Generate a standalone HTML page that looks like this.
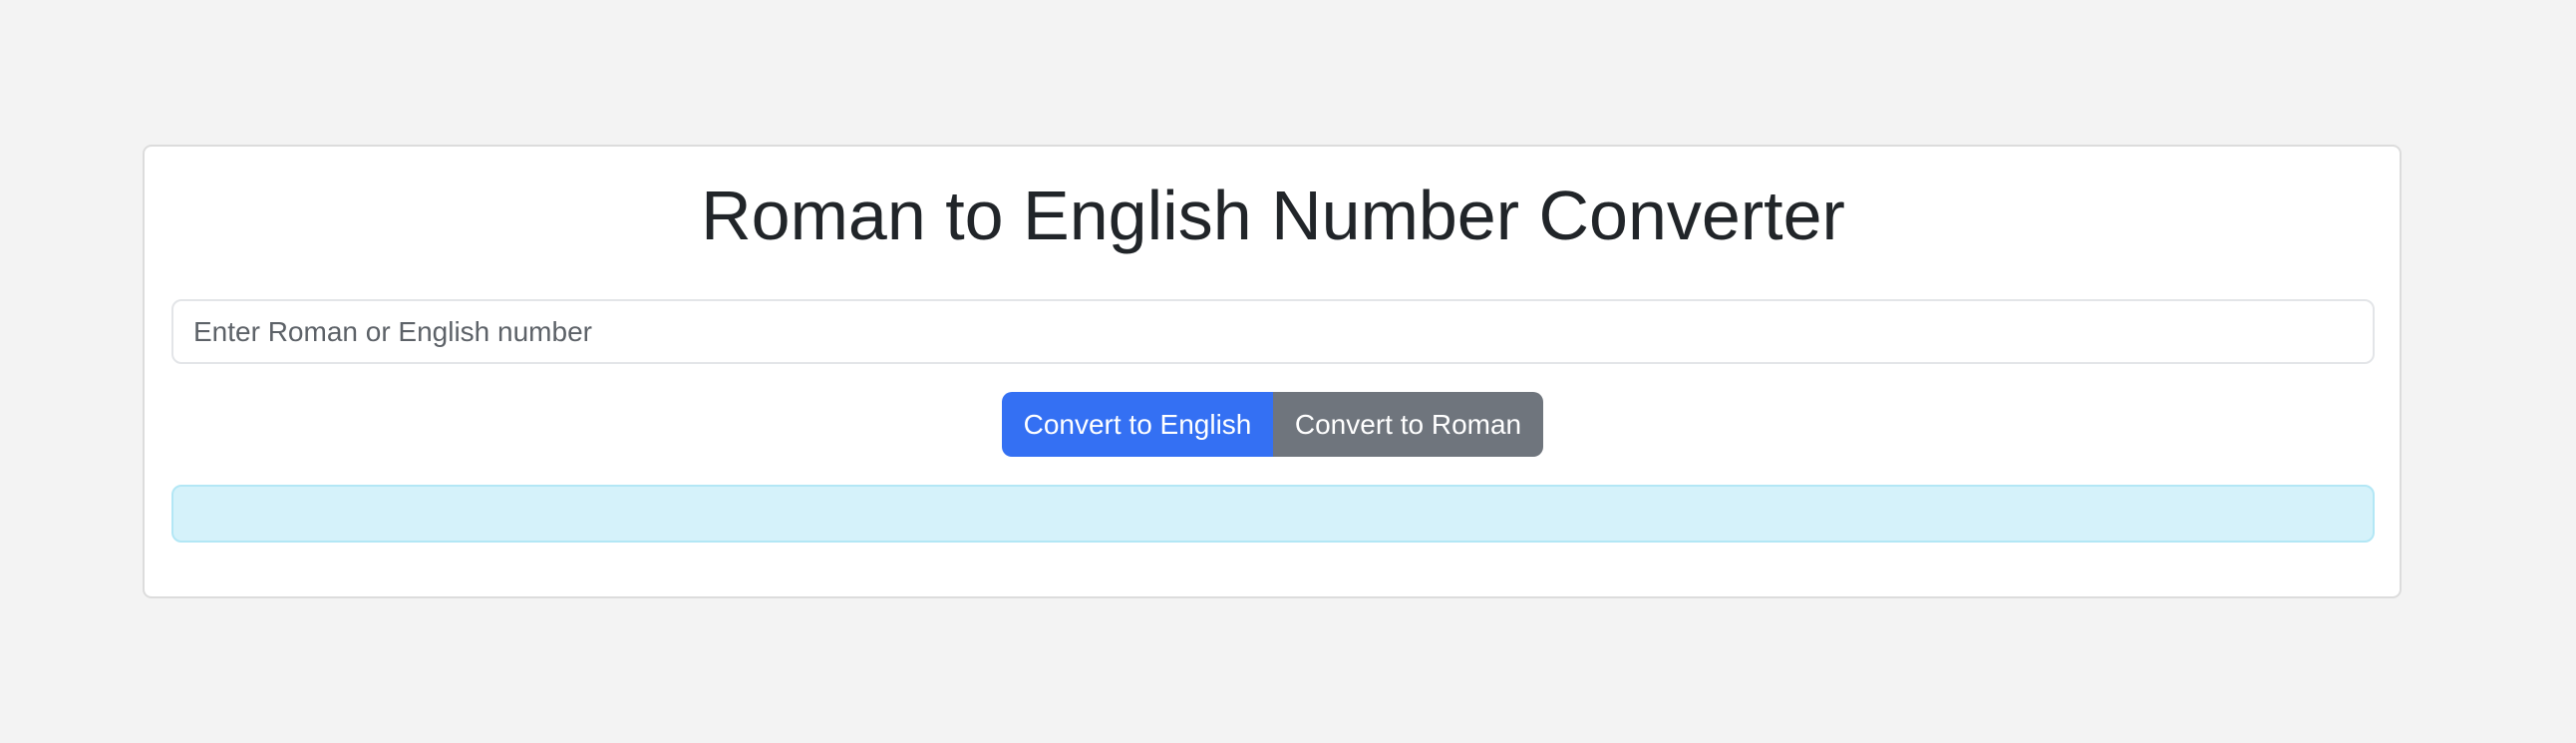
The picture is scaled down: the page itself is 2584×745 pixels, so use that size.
<!DOCTYPE html>
<html><head><style>
body{margin:0;width:2584px;height:745px;background:#f3f3f3;font-family:"Liberation Sans",Arial,sans-serif;position:relative;overflow:hidden}
.card{position:absolute;left:143px;top:145px;width:2266px;height:455px;box-sizing:border-box;background:#fff;border:2px solid #dcdcdc;border-radius:9px}
h1{position:absolute;left:0;right:30px;top:176px;margin:0;text-align:center;font-weight:400;font-size:70px;line-height:80px;color:#212529}
.inp{position:absolute;left:172px;top:300px;width:2210px;height:65px;box-sizing:border-box;border:2px solid #e3e5e8;border-radius:10px;font-size:28px;color:#5d6268;padding-left:20px;line-height:61px}
.b{position:absolute;top:393px;height:65px;color:#fff;font-size:28px;line-height:65px;text-align:center}
.b1{left:1005px;width:272px;background:#3470f3;border-radius:10px 0 0 10px}
.b2{left:1277px;width:271px;background:#6f757d;border-radius:0 10px 10px 0}
.al{position:absolute;left:172px;top:486px;width:2210px;height:58px;box-sizing:border-box;background:#d5f2fa;border:2px solid #b3e7f5;border-radius:10px}
</style></head><body>
<div class="card"></div>
<h1>Roman to English Number Converter</h1>
<div class="inp">Enter Roman or English number</div>
<div class="b b1">Convert to English</div>
<div class="b b2">Convert to Roman</div>
<div class="al"></div>
</body></html>
